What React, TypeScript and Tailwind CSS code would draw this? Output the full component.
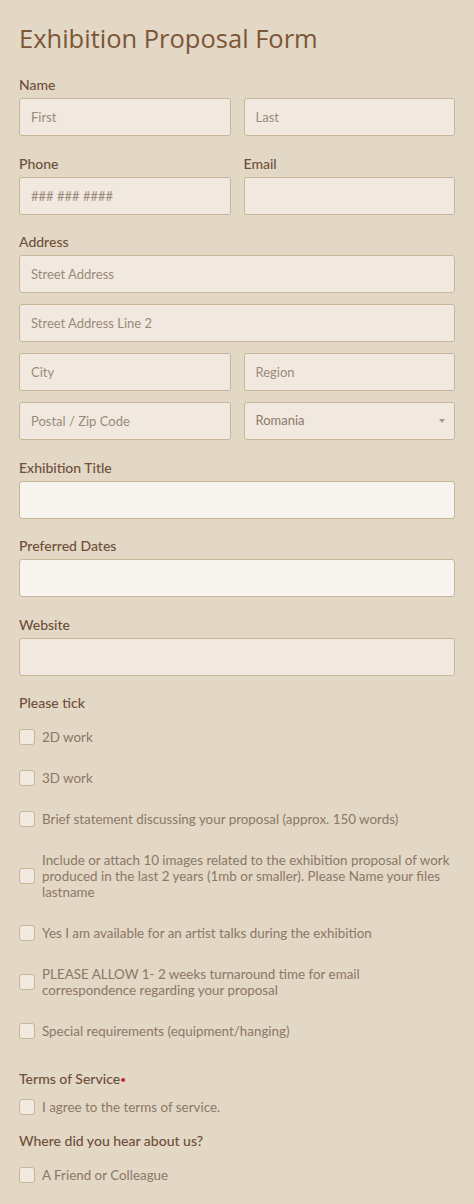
const label = "block text-[14px] leading-5 font-medium text-[#6e4f3a] mb-[3px]";
const input =
  "w-full h-[38px] rounded-[3px] border border-[#c9b597] bg-[#f1e9df] px-[11px] text-[13px] text-[#6e4f3a] placeholder:text-[#9b8a7a] outline-none";
const inputLight =
  "w-full h-[38px] rounded-[3px] border border-[#c9b597] bg-[#f8f4ef] px-[11px] text-[13px] text-[#6e4f3a] outline-none";

const ticks = [
  '2D work',
  '3D work',
  'Brief statement discussing your proposal (approx. 150 words)',
  'Include or attach 10 images related to the exhibition proposal of work produced in the last 2 years (1mb or smaller). Please Name your files lastname',
  'Yes I am available for an artist talks during the exhibition',
  'PLEASE ALLOW 1- 2 weeks turnaround time for email correspondence regarding your proposal',
  'Special requirements (equipment/hanging)',
];

function Check({ text }: { text: string }) {
  return (
    <label className="flex items-center gap-[7px]">
      <span className="shrink-0 w-4 h-4 rounded-[3px] border border-[#c9b597] bg-[#f1e9df]" />
      <span className="text-[13.4px] leading-4 text-[#8c7866]">{text}</span>
    </label>
  );
}

export default function App() {
  return (
    <div
      className="min-h-[1204px] bg-[#e3d7c5] px-[19px] pt-5 pb-6"
      style={{ fontFamily: 'Lato, "Noto Sans", sans-serif' }}
    >
      <h1
        className="text-[25.5px] leading-9 text-[#7b5637] mb-[19px]"
        style={{ fontFamily: '"Open Sans", sans-serif' }}
      >
        Exhibition Proposal Form
      </h1>

      <div className="flex flex-col gap-[17.5px]">
        <div>
          <span className={label}>Name</span>
          <div className="grid grid-cols-2 gap-[13px]">
            <input className={input} placeholder="First" />
            <input className={input} placeholder="Last" />
          </div>
        </div>

        <div className="grid grid-cols-2 gap-[13px]">
          <div>
            <span className={label}>Phone</span>
            <input className={input} placeholder="### ### ####" />
          </div>
          <div>
            <span className={label}>Email</span>
            <input className={input} />
          </div>
        </div>

        <div>
          <span className={label}>Address</span>
          <div className="flex flex-col gap-[11px]">
            <input className={input} placeholder="Street Address" />
            <input className={input} placeholder="Street Address Line 2" />
            <div className="grid grid-cols-2 gap-[13px]">
              <input className={input} placeholder="City" />
              <input className={input} placeholder="Region" />
            </div>
            <div className="grid grid-cols-2 gap-[13px]">
              <input className={input} placeholder="Postal / Zip Code" />
              <div className="relative">
                <div className={input + ' flex items-center text-[#8c7866]'}>Romania</div>
                <svg className="absolute right-[10px] top-[17px]" width="6" height="4" viewBox="0 0 6 4">
                  <path d="M0 0h6L3 4z" fill="#a99a8a" />
                </svg>
              </div>
            </div>
          </div>
        </div>

        <div>
          <span className={label}>Exhibition Title</span>
          <input className={inputLight} />
        </div>

        <div>
          <span className={label}>Preferred Dates</span>
          <input className={inputLight} />
        </div>

        <div>
          <span className={label}>Website</span>
          <input className={input} />
        </div>

        <div>
          <span className="block text-[14px] leading-5 font-medium text-[#6e4f3a] mb-4">Please tick</span>
          <div className="flex flex-col gap-[25px]">
            {ticks.map((t) => (
              <Check key={t} text={t} />
            ))}
          </div>
        </div>

        <div className="mt-[12.5px]">
          <span className="block text-[14px] leading-5 font-medium text-[#6e4f3a] mb-[10px]">
            Terms of Service<span className="text-[#c0262d] align-top text-[10px]">•</span>
          </span>
          <Check text="I agree to the terms of service." />
        </div>

        <div className="-mt-[1.5px]">
          <span className="block text-[14px] leading-5 font-medium text-[#6e4f3a] mb-4">Where did you hear about us?</span>
          <Check text="A Friend or Colleague" />
        </div>
      </div>
    </div>
  );
}
